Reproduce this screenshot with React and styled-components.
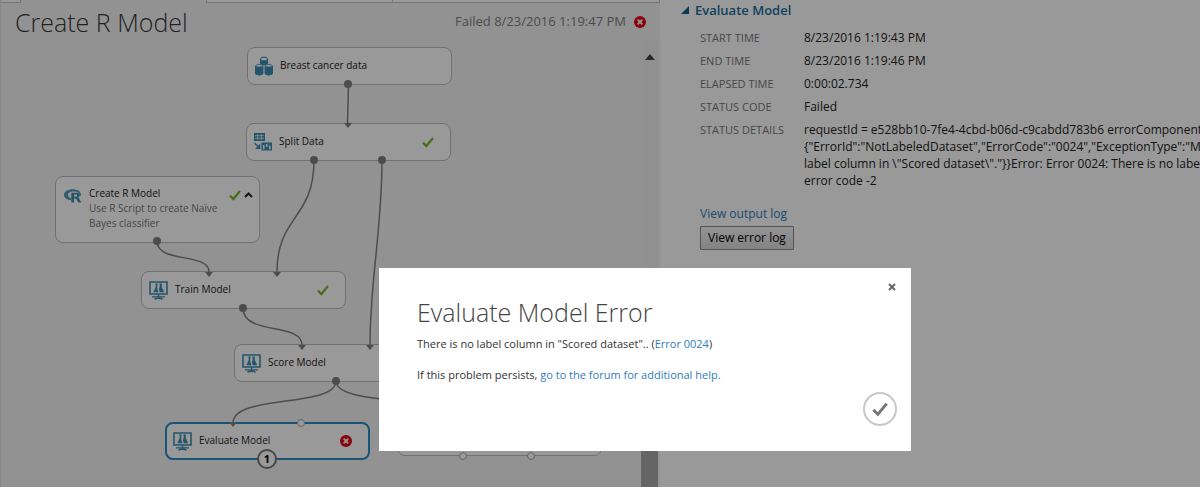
import React from 'react';
import styled, { createGlobalStyle } from 'styled-components';

const GlobalStyle = createGlobalStyle`
  *, *::before, *::after { box-sizing: border-box; }
  html, body { margin: 0; padding: 0; }
  body {
    font-family: 'Open Sans', 'Noto Sans', sans-serif;
    font-size: 12px;
    line-height: 17px;
    color: #222;
    background: #fff;
  }
  h1, h2, p, dl, dd { margin: 0; font-weight: inherit; }
  button { font: inherit; cursor: pointer; }
`;

const Page = styled.div`
  display: flex;
  min-height: 100vh;
  overflow: hidden;
`;

const Workspace = styled.main`
  flex: 0 0 55%;
  min-width: 0;
  display: flex;
  flex-direction: column;
  background: #f3f3f3;
  border-left: 1px solid #e2e2e2;
`;

const TabStrip = styled.div`
  display: flex;
  height: 3px;
  flex: none;
`;

const Tab = styled.div`
  flex: ${(p) => p.$grow || '0 0 auto'};
  width: ${(p) => p.$width || 'auto'};
  background: ${(p) => (p.$active ? '#f3f3f3' : '#fff')};
  border: solid #c6c6c6;
  border-width: ${(p) => (p.$active ? '0 1px 0 0' : '0 1px 1px 0')};
`;

const Header = styled.header`
  display: flex;
  align-items: center;
  justify-content: space-between;
  height: 37px;
  padding: 0 14px;
`;

const Title = styled.h1`
  font-size: 25px;
  line-height: 36px;
  font-weight: 300;
  color: #3a3a3a;
`;

const RunStatus = styled.div`
  display: flex;
  align-items: center;
  gap: 8px;
  font-size: 13px;
  color: #808080;
`;

const CanvasRow = styled.div`
  flex: 1;
  display: flex;
  min-height: 447px;
`;

const Canvas = styled.section`
  flex: 1;
  position: relative;
  overflow: hidden;
`;

const ScrollTrack = styled.div`
  flex: none;
  display: flex;
  flex-direction: column;
  align-items: center;
  justify-content: space-between;
  width: 17px;
  margin-right: 2px;
  padding-top: 14px;
  background: #f1f1f1;
`;

const ScrollThumb = styled.div`
  width: 17px;
  height: 160px;
  background: #a9a9a9;
`;

const Wires = styled.svg`
  position: absolute;
  left: 0;
  top: 0;
  pointer-events: none;
`;

const Node = styled.div`
  position: absolute;
  left: ${(p) => p.$x}px;
  top: ${(p) => p.$y}px;
  width: 205px;
  min-height: 38px;
  display: flex;
  align-items: ${(p) => (p.$tall ? 'flex-start' : 'center')};
  gap: 7px;
  padding: ${(p) => (p.$tall ? '9px 6px 10px 8px' : '0 16px 0 7px')};
  background: #fff;
  border: 1px solid #bdbdbd;
  border-radius: 8px;

  ${(p) => p.$selected && `
    padding-left: 6px;
    border: 2px solid #2a8dc8;
  `}
`;

const NodeText = styled.div`
  flex: 1;
  min-width: 0;
  padding-bottom: 1px;
  font-size: 10px;
  line-height: 15px;
  color: #222;
`;

const NodeNote = styled.p`
  margin-right: -10px;
  color: #777;
`;

const NodeState = styled.div`
  display: flex;
  align-items: center;
  gap: 3px;
  padding-top: ${(p) => (p.$tall ? '3px' : '0')};
`;

const Badge = styled.span`
  position: absolute;
  left: 90px;
  bottom: -11px;
  width: 20px;
  height: 20px;
  border: 2px solid #777;
  border-radius: 50%;
  background: #fff;
  font-size: 11px;
  font-weight: 700;
  line-height: 16px;
  text-align: center;
  color: #000;
`;

const Properties = styled.aside`
  flex: 1;
  min-width: 0;
  padding: 1px 0 0 21px;
  overflow: hidden;
  background: #fff;
`;

const SectionHead = styled.h2`
  display: flex;
  align-items: center;
  gap: 6px;
  font-size: 13px;
  line-height: 18px;
  font-weight: 600;
  color: #1a6c9c;
`;

const Details = styled.dl`
  display: grid;
  grid-template-columns: 104px 1fr;
  row-gap: 6px;
  padding: 10px 0 0 19px;
  white-space: nowrap;
`;

const Term = styled.dt`
  font-size: 11px;
  color: #777;
`;

const Value = styled.dd`
  color: #222;
  white-space: pre;
`;

const Logs = styled.div`
  display: flex;
  flex-direction: column;
  align-items: flex-start;
  gap: 4px;
  padding: 16px 0 0 19px;
`;

const Link = styled.a`
  color: #2f7dbd;
  text-decoration: none;
`;

const LogButton = styled.button`
  height: 24px;
  padding: 0 7px;
  line-height: 20px;
  color: #000;
  background: linear-gradient(#f4f4f4, #dcdcdc);
  border: 1px solid #8a8a8a;
  border-radius: 1px;
`;

const Overlay = styled.div`
  position: fixed;
  inset: 0;
  display: flex;
  justify-content: center;
  align-items: flex-start;
  padding: 268px 0 0 90px;
  background: rgba(0, 0, 0, 0.4);
`;

const Dialog = styled.section`
  display: flex;
  flex-direction: column;
  width: 532px;
  max-width: 100%;
  padding: 12px 12px 25px 38px;
  background: #fff;
  font-size: 11px;
  color: #333;
`;

const DialogTitle = styled.h2`
  margin: 0 0 5px;
  font-size: 25px;
  line-height: 36px;
  font-weight: 300;
  color: #444;
`;

const Message = styled.p`
  & + & {
    margin-top: 14px;
  }
`;

const IconButton = styled.button`
  align-self: flex-end;
  display: grid;
  place-items: center;
  width: 14px;
  height: 14px;
  padding: 0;
  background: none;
  border: 0;
`;

const ConfirmButton = styled(IconButton)`
  width: 34px;
  height: 34px;
  margin: 9px 2px 0 0;
  border: 2px solid #c8c8c8;
  border-radius: 50%;
`;

const Check = ({ color = '#76b82a', size = 12 }) => (
  <svg width={size} height={size} viewBox="0 0 12 12" fill="none" aria-hidden="true">
    <path d="M1 6.6 4.4 10 11 2" stroke={color} strokeWidth="2.2" />
  </svg>
);

const Failed = ({ size = 12 }) => (
  <svg width={size} height={size} viewBox="0 0 12 12" aria-hidden="true">
    <circle cx="6" cy="6" r="6" fill="#e30613" />
    <path d="M3.7 3.7 8.3 8.3M8.3 3.7 3.7 8.3" stroke="#fff" strokeWidth="1.8" />
  </svg>
);

const Chevron = () => (
  <svg width="9" height="8" viewBox="0 0 9 8" fill="none" aria-hidden="true">
    <path d="M1 6 4.5 2.5 8 6" stroke="#222" strokeWidth="2" />
  </svg>
);

const BLUE = '#3c8db5';

const DatasetIcon = () => (
  <svg width="18" height="20" viewBox="0 0 18 20" aria-hidden="true">
    <path d="M5 3v4.500c0 1 1.800 1.800 4 1.800s4-.8 4-1.800V3z" fill={BLUE} />
    <ellipse cx="9" cy="3" rx="3.600" ry="1.900" fill="#fff" stroke={BLUE} />
    <path d="M0 10v7.600C0 18.700 1.800 19.500 4.200 19.500s4.200-.8 4.200-1.900V10z" fill={BLUE} />
    <path d="M9.600 10v7.600c0 1.100 1.800 1.900 4.200 1.900s4.200-.8 4.200-1.900V10z" fill={BLUE} />
    <ellipse cx="4.200" cy="9.800" rx="3.500" ry="1.300" fill="#fff" stroke={BLUE} strokeWidth=".8" />
    <ellipse cx="13.800" cy="9.800" rx="3.500" ry="1.300" fill="#fff" stroke={BLUE} strokeWidth=".8" />
  </svg>
);

const SplitIcon = () => (
  <svg width="18" height="18" viewBox="0 0 18 18" aria-hidden="true">
    <rect width="11" height="8" fill={BLUE} />
    <path d="M1 2.700h9M1 5.300h9M3.700 1v6M7.300 1v6" stroke="#fff" strokeWidth=".7" />
    <path d="M.5 10 5 14.500" stroke={BLUE} strokeWidth="1.500" />
    <path d="M6.300 10.500V16H1z" fill={BLUE} />
    <rect x="7.500" y="9.500" width="10.500" height="8" fill={BLUE} />
    <path d="M9 12h1.500v4.500H9zM12 11h1.500v3H12zM15 12.500h1.500v4H15z" fill="#fff" />
  </svg>
);

const RIcon = () => (
  <svg width="18" height="17" viewBox="0 -3 18 17" aria-hidden="true">
    <path
      fillRule="evenodd"
      fill="#5a9abf"
      d="M8.500.300C13.300.300 17 2.500 17 5.600c0 .7-.2 1.300-.5 1.800L14.700 4.200C13.800 3 11.800 2.500 9.800 2.500 6.500 2.500 4 4 4 6c0 1.500 1.200 2.700 3.200 3.200v2.100C3 11 0 8.900 0 6 0 2.700 3.800.300 8.500.300z"
    />
    <path
      fillRule="evenodd"
      fill={BLUE}
      d="M7.300 3.700h5.200c2 0 3.200.9 3.200 2.500 0 1.200-.7 2-1.700 2.300.6.3 1 .8 1.400 1.500l1.900 3.500h-3l-1.600-3c-.5-.9-.8-1.100-1.500-1.100H10v4.100H7.300zM10 5.500v2.200h2c.8 0 1.200-.4 1.200-1.100S12.800 5.500 12 5.500z"
    />
  </svg>
);

const ModelIcon = () => (
  <svg width="19" height="19" viewBox="0 0 19 19" fill="none" aria-hidden="true">
    <path d="M1 1h17v12H1z" stroke={BLUE} strokeWidth="1.600" />
    <path d="M9.500 13v4M5.500 18.300c1-1.400 7-1.400 8 0M3 15.800h13" stroke={BLUE} strokeWidth="1.300" />
    <path d="M6 3h3M7 3v3l-2.200 5h4.400L8 8V3zM10 3h3M11 3v3l-1 2 1 3h3.700L12.500 6V3z" fill={BLUE} stroke={BLUE} strokeWidth=".6" />
    <path d="M9.500 5.500v5" stroke="#fff" strokeWidth=".7" />
  </svg>
);

const WIRES = [
  'M348.500 44L347.500 83',
  'M314 120C314 180 277 175 277 232',
  'M382 120C382 190 370 240 370 305',
  'M157 201C157 224 209 212 209 232',
  'M243 268C243 296 302 282 302 305',
  'M336 341C336 368 233 354 233 383',
  'M336 341C336 368 463 354 463 383',
];
const ARROWS = [[348, 83], [277, 232], [370, 305], [209, 232], [302, 305], [233, 382]];
const OUT_PORTS = [[348, 44], [314, 120], [382, 120], [157, 201], [243, 268], [336, 341]];
const OPEN_PORTS = [[301, 383], [463, 416], [531, 416]];
const WIRE_COLOR = '#808080';

const NODES = [
  { x: 246, y: 7, name: 'Breast cancer data', icon: <DatasetIcon /> },
  { x: 245, y: 83, name: 'Split Data', icon: <SplitIcon />, state: <Check /> },
  {
    x: 54, y: 136, name: 'Create R Model', note: 'Use R Script to create Naïve Bayes classifier', icon: <RIcon />,
    state: <><Check /><Chevron /></>,
  },
  { x: 140, y: 231, name: 'Train Model', icon: <ModelIcon />, state: <Check /> },
  { x: 233, y: 304, name: 'Score Model', icon: <ModelIcon /> },
  { x: 396, y: 378, name: '' },
  { x: 164, y: 382, name: 'Evaluate Model', icon: <ModelIcon />, state: <Failed />, selected: true, badge: '1' },
];

const STATUS = [
  ['START TIME', '8/23/2016 1:19:43 PM'],
  ['END TIME', '8/23/2016 1:19:46 PM'],
  ['ELAPSED TIME', '0:00:02.734'],
  ['STATUS CODE', 'Failed'],
  [
    'STATUS DETAILS',
    [
      'requestId = e528bb10-7fe4-4cbd-b06d-c9cabdd783b6 errorComponent',
      '{"ErrorId":"NotLabeledDataset","ErrorCode":"0024","ExceptionType":"Mo',
      'label column in \\"Scored dataset\\"."}}Error: Error 0024: There is no label',
      'error code -2',
    ].join('\n'),
  ],
];

export default function App() {
  return (
    <>
      <GlobalStyle />
      <Page>
        <Workspace>
          <TabStrip>
            <Tab $width="20px" />
            <Tab $width="186px" $active />
            <Tab $width="186px" />
            <Tab $grow="1" />
          </TabStrip>
          <Header>
            <Title>Create R Model</Title>
            <RunStatus>
              Failed 8/23/2016 1:19:47 PM
              <Failed />
            </RunStatus>
          </Header>
          <CanvasRow>
            <Canvas>
              {NODES.map((n) => (
                <Node key={n.x} $x={n.x} $y={n.y} $tall={Boolean(n.note)} $selected={n.selected}>
                  {n.icon}
                  <NodeText>
                    {n.name}
                    {n.note && <NodeNote>{n.note}</NodeNote>}
                  </NodeText>
                  {n.state && <NodeState $tall={Boolean(n.note)}>{n.state}</NodeState>}
                  {n.badge && <Badge>{n.badge}</Badge>}
                </Node>
              ))}
              <Wires width="640" height="447" viewBox="1 0 640 447" aria-hidden="true">
                {WIRES.map((d) => (
                  <path key={d} d={d} fill="none" stroke={WIRE_COLOR} strokeWidth="1.500" />
                ))}
                {ARROWS.map(([x, y]) => (
                  <path key={x} d={`M${x - 4} ${y}h8l-4 5z`} fill={WIRE_COLOR} />
                ))}
                {OUT_PORTS.map(([x, y]) => (
                  <circle key={x} cx={x} cy={y} r="4" fill={WIRE_COLOR} />
                ))}
                {OPEN_PORTS.map(([x, y]) => (
                  <circle key={x} cx={x} cy={y} r="3.500" fill="#fff" stroke="#aaa" />
                ))}
              </Wires>
            </Canvas>
            <ScrollTrack>
              <svg width="10" height="6" viewBox="0 0 10 6" aria-hidden="true">
                <path d="M0 6 5 0l5 6z" fill="#444" />
              </svg>
              <ScrollThumb />
            </ScrollTrack>
          </CanvasRow>
        </Workspace>

        <Properties>
          <SectionHead>
            <svg width="8" height="8" viewBox="0 0 8 8" aria-hidden="true">
              <path d="M8 0v8H0z" fill="#1a5f8a" />
            </svg>
            Evaluate Model
          </SectionHead>
          <Details>
            {STATUS.map(([term, value]) => (
              <React.Fragment key={term}>
                <Term>{term}</Term>
                <Value>{value}</Value>
              </React.Fragment>
            ))}
          </Details>
          <Logs>
            <Link href="#output-log">View output log</Link>
            <LogButton type="button">View error log</LogButton>
          </Logs>
        </Properties>
      </Page>

      <Overlay>
        <Dialog role="dialog" aria-modal="true" aria-labelledby="dialog-title">
          <IconButton type="button" aria-label="Close">
            <svg width="8" height="8" viewBox="0 0 8 8" aria-hidden="true">
              <path d="M1 1 7 7M7 1 1 7" stroke="#666" strokeWidth="2" />
            </svg>
          </IconButton>
          <DialogTitle id="dialog-title">Evaluate Model Error</DialogTitle>
          <Message>
            There is no label column in "Scored dataset".. (<Link href="#error-0024">Error 0024</Link>)
          </Message>
          <Message>
            If this problem persists, <Link href="#forum">go to the forum for additional help.</Link>
          </Message>
          <ConfirmButton type="button" aria-label="OK">
            <Check color="#777" size={16} />
          </ConfirmButton>
        </Dialog>
      </Overlay>
    </>
  );
}
